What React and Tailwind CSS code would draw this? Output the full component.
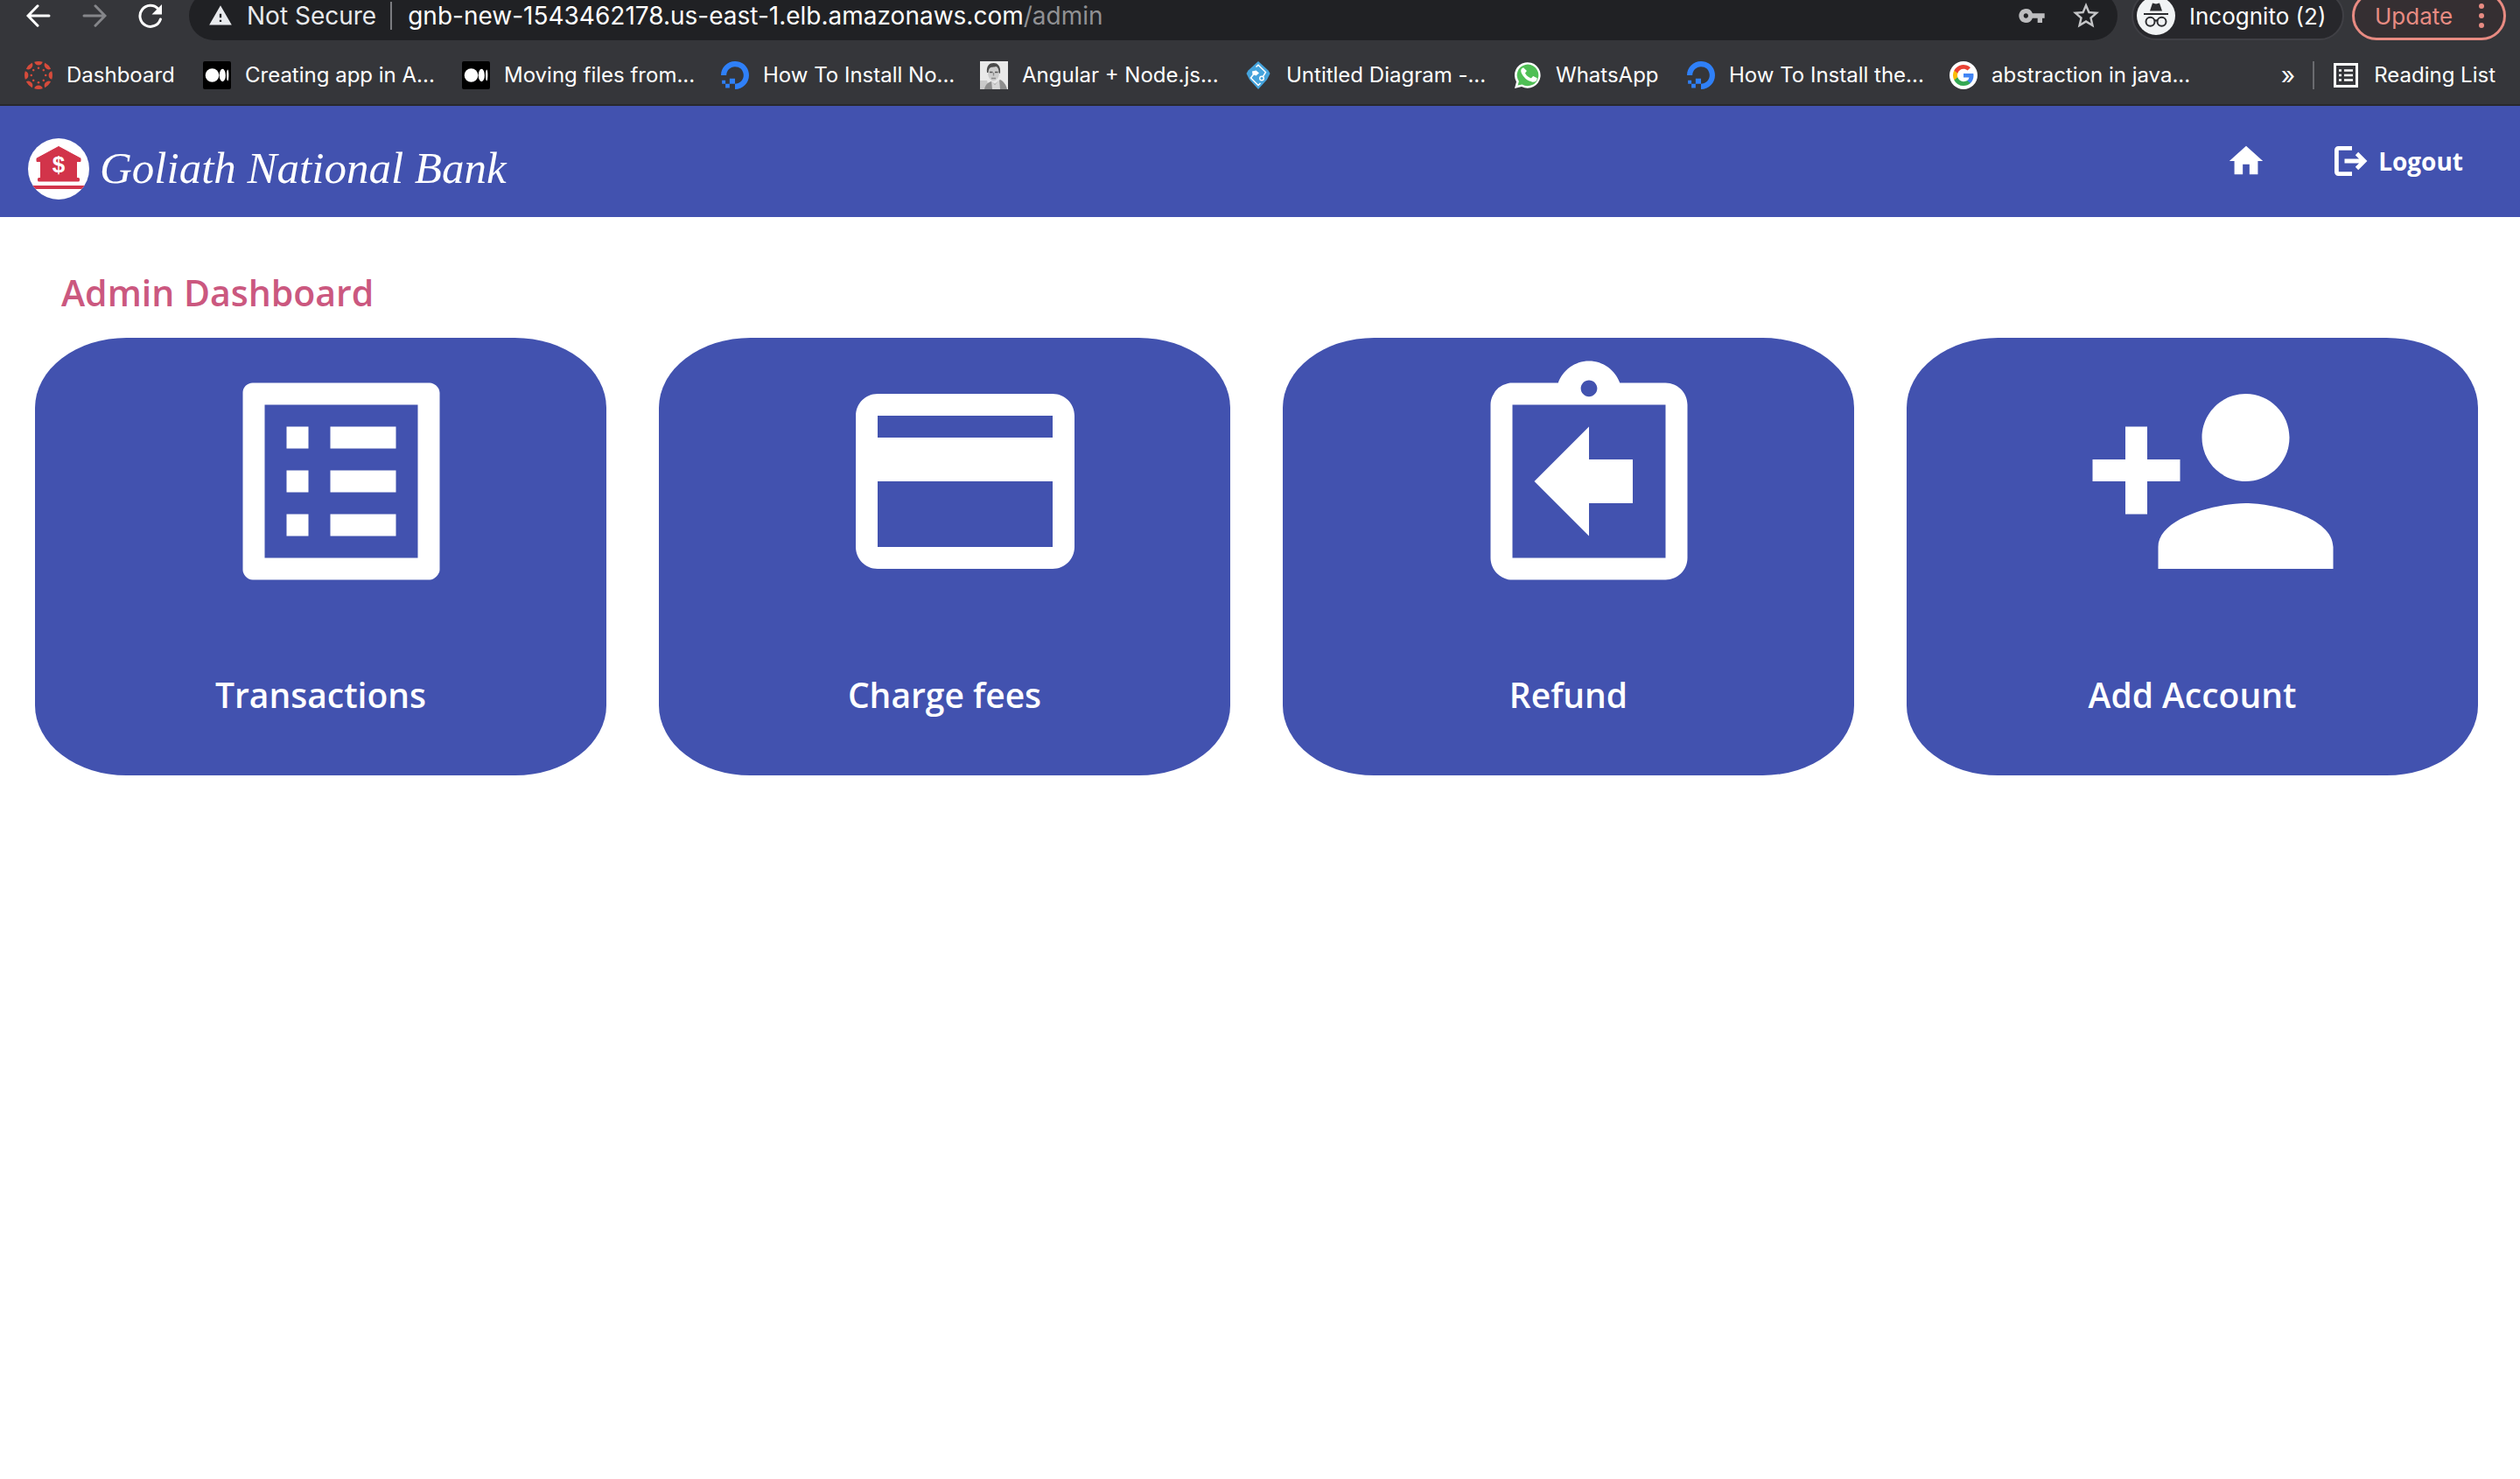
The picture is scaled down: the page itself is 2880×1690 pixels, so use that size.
import {
  MdListAlt,
  MdCreditCard,
  MdOutlineAssignmentReturn,
  MdPersonAdd,
  MdHome,
  MdVpnKey,
  MdStarBorder,
  MdWarning,
} from "react-icons/md";
import { SiDigitalocean } from "react-icons/si";

function CanvasIcon() {
  const angles = [0, 45, 90, 135, 180, 225, 270, 315];
  return (
    <svg viewBox="0 0 32 32" className="size-8 shrink-0" fill="#d64b3b" aria-hidden="true">
      {angles.map((a) => (
        <g key={a} transform={`rotate(${a} 16 16)`}>
          <path d="M11.200 0.800A16 16 0 0 1 20.800 0.800A5 5 0 0 1 11.200 0.800z" />
          <circle cx="16" cy="7.800" r="1.300" />
        </g>
      ))}
    </svg>
  );
}

function MediumIcon() {
  return (
    <svg viewBox="0 0 32 32" className="size-8 shrink-0" aria-hidden="true">
      <rect width="32" height="32" rx="2" fill="#000" />
      <g fill="#fff">
        <circle cx="10.5" cy="16" r="7.8" />
        <ellipse cx="22.3" cy="16" rx="3.6" ry="7.2" />
        <ellipse cx="28.2" cy="16" rx="1.2" ry="6.4" />
      </g>
    </svg>
  );
}

function OceanIcon() {
  return <SiDigitalocean className="size-8 shrink-0 text-[#2f80f8]" aria-hidden="true" />;
}

function PortraitIcon() {
  return (
    <svg viewBox="0 0 32 32" className="size-8 shrink-0" aria-hidden="true">
      <rect width="32" height="32" fill="#e9e9e9" />
      <path d="M0 22h8l3 10H0z" fill="#c9c9c9" />
      <path d="M5 32c1-5 4-8 8-9l4 3 6-5c4 2 7 6 8 11z" fill="#8d8d8d" />
      <path d="M13 22l4 5 5-6 1 11h-9z" fill="#d6d6d6" />
      <ellipse cx="15.5" cy="13.5" rx="6.5" ry="9" fill="#cdcdcd" />
      <path d="M8 13C7 5 11 2 15.500 2S24 5 23 14l-1.500-1c0-4-1-6-3-7-3 1-6 0-7.500 2-1 1-1.500 3-1.500 5z" fill="#4b4b4b" />
      <path d="M11 12.500h3.500M17 12.500h3.500" stroke="#5a5a5a" strokeWidth="1.600" />
      <path d="M15.500 13v3.500M13 19.500h5" stroke="#8a8a8a" strokeWidth="1.400" fill="none" />
    </svg>
  );
}

function DiagramIcon() {
  return (
    <svg viewBox="0 0 32 32" className="size-8 shrink-0" fill="none" aria-hidden="true">
      <path d="M16 0l11.500 10.500L29.500 14 26 21 16 32 6 21 2.500 14 4.500 10.500z" fill="#45a3dc" />
      <path d="M13.500 6.500L16 4.200l8.500 8.300-3.200 5.200M11 14.500L7.500 19l8.500 8.500 2.500-2.500" stroke="#fff" strokeWidth="1.500" />
      <path d="M9 11.500l4.500-1 3.500 3-3.500 3-4-1.500z" fill="#fff" />
      <circle cx="20" cy="19.500" r="2.300" stroke="#fff" strokeWidth="1.400" />
    </svg>
  );
}

function WhatsAppIcon() {
  return (
    <svg viewBox="0 0 32 32" className="size-8 shrink-0" aria-hidden="true">
      <path d="M1 31l2-7.600A14.800 14.800 0 1 1 9 29.100z" fill="#fff" />
      <path d="M4.600 27.600l1.300-4.700A12.300 12.300 0 1 1 9.600 26.400z" fill="#4fbf55" />
      <path
        d="M11.500 8.800c-.4-.8-.8-.8-1.200-.8-1.200 0-2.600 1.300-2.600 3.600 0 2.200 1.600 4.300 1.900 4.600.2.300 3.100 5 7.700 6.800 3.800 1.500 4.600 1.200 5.400 1.100.8-.1 2.700-1.100 3.100-2.200.4-1.100.4-2 .3-2.200-.1-.2-.4-.3-.9-.5l-3-1.500c-.4-.1-.7-.2-1 .2l-1.400 1.700c-.3.300-.5.300-1 .1-.4-.2-1.900-.7-3.600-2.200-1.300-1.200-2.200-2.700-2.500-3.100-.300-.4 0-.7.2-.9l1.200-1.500c.2-.3.200-.5.100-.8z"
        fill="#fff"
        transform="translate(0.500 -0.500)"
      />
    </svg>
  );
}

function GoogleIcon() {
  return (
    <svg viewBox="0 0 32 32" className="size-8 shrink-0" aria-hidden="true">
      <circle cx="16" cy="16" r="16" fill="#fff" />
      <g transform="translate(4 4)">
        <path fill="#4285f4" d="M23.500 12.300c0-.8-.1-1.600-.2-2.300H12v4.500h6.500a5.500 5.500 0 0 1-2.400 3.600v3h3.900c2.200-2.100 3.500-5.100 3.500-8.800z" />
        <path fill="#34a853" d="M12 24c3.200 0 6-1.100 8-2.900l-3.900-3c-1.100.7-2.400 1.100-4.100 1.100-3.100 0-5.800-2.100-6.700-4.900h-4v3.100A12 12 0 0 0 12 24z" />
        <path fill="#fbbc05" d="M5.300 14.300a7.200 7.200 0 0 1 0-4.600V6.600h-4a12 12 0 0 0 0 10.800z" />
        <path fill="#ea4335" d="M12 4.800c1.800 0 3.300.6 4.600 1.800L20 3.200A12 12 0 0 0 1.300 6.600l4 3.100C6.200 6.900 8.900 4.800 12 4.800z" />
      </g>
    </svg>
  );
}

function ReadingListIcon() {
  return (
    <svg viewBox="0 0 28 28" className="size-7 shrink-0" fill="none" aria-hidden="true">
      <rect x="1.500" y="1.500" width="25" height="25" stroke="#fff" strokeWidth="3" />
      <path d="M6 8.500h3M6 14h3M6 19.500h3M12 8.500h10M12 14h10M12 19.500h10" stroke="#fff" strokeWidth="2.600" />
    </svg>
  );
}

function ArrowIcon({ flip = false }) {
  return (
    <svg viewBox="0 0 28 28" className={flip ? "size-7 rotate-180" : "size-7"} fill="none" stroke="currentColor" strokeWidth="3" strokeLinecap="round" aria-hidden="true">
      <path d="M26 14H2.500M13 2.800L2 14l11 11.200" />
    </svg>
  );
}

function ReloadIcon() {
  return (
    <svg viewBox="0 0 28 28" className="size-7" aria-hidden="true">
      <path d="M22.800 6.200A12 12 0 1 0 25.400 18" fill="none" stroke="currentColor" strokeWidth="3" strokeLinecap="round" />
      <path d="M27 1v11.500H15.500z" fill="currentColor" />
    </svg>
  );
}

function IncognitoIcon() {
  return (
    <svg viewBox="0 0 44 44" className="size-11" aria-hidden="true">
      <circle cx="22" cy="22" r="22" fill="#f1f3f4" />
      <path d="M15 16.500L18 7.500l4 1 4-1 3 9z" fill="#2b2c2f" />
      <path d="M8 20h28" stroke="#2b2c2f" strokeWidth="2" />
      <g fill="none" stroke="#2b2c2f" strokeWidth="2">
        <circle cx="15.500" cy="28.800" r="5" />
        <circle cx="28.500" cy="28.800" r="5" />
        <path d="M20.300 28c1-1 2.400-1 3.400 0" />
      </g>
    </svg>
  );
}

function BankLogo() {
  return (
    <svg viewBox="0 0 70 70" className="size-[70px] shrink-0" aria-hidden="true">
      <clipPath id="bank-disc">
        <circle cx="35" cy="35" r="35" />
      </clipPath>
      <circle cx="35" cy="35" r="35" fill="#fff" />
      <g fill="#d2344a" clipPath="url(#bank-disc)">
        <path d="M35 9.500L60 23v3.500H10V23z" stroke="#d2344a" strokeLinejoin="round" />
        <rect x="14" y="25" width="42" height="22" />
        <rect x="11" y="45" width="48" height="4.500" rx="1.500" />
        <rect x="4" y="54" width="62" height="4" />
      </g>
      <text x="35" y="39" textAnchor="middle" fill="#fff" className="font-['Liberation_Sans',sans-serif] text-[26px] font-bold">
        $
      </text>
    </svg>
  );
}

function LogoutIcon() {
  return (
    <svg viewBox="0 0 38 34" className="h-[34px] w-[38px]" fill="none" stroke="currentColor" strokeWidth="4.800" aria-hidden="true">
      <path d="M20 2.400H4.400a2 2 0 0 0-2 2v25.200a2 2 0 0 0 2 2H20" />
      <path d="M11.500 17H34M25.500 8.500L34 17l-8.500 8.500" />
    </svg>
  );
}

const bookmarks = [
  { label: "Dashboard", Icon: CanvasIcon, width: "w-[204px]" },
  { label: "Creating app in A...", Icon: MediumIcon, width: "w-[296px]" },
  { label: "Moving files from...", Icon: MediumIcon, width: "w-[296px]" },
  { label: "How To Install No...", Icon: OceanIcon, width: "w-[296px]" },
  { label: "Angular + Node.js...", Icon: PortraitIcon, width: "w-[302px]" },
  { label: "Untitled Diagram -...", Icon: DiagramIcon, width: "w-[308px]" },
  { label: "WhatsApp", Icon: WhatsAppIcon, width: "w-[198px]" },
  { label: "How To Install the...", Icon: OceanIcon, width: "w-[300px]" },
  { label: "abstraction in java...", Icon: GoogleIcon, width: "w-[296px]" },
];

const cards = [
  { label: "Transactions", Icon: MdListAlt },
  { label: "Charge fees", Icon: MdCreditCard },
  { label: "Refund", Icon: MdOutlineAssignmentReturn },
  { label: "Add Account", Icon: MdPersonAdd },
];

function BrowserBar() {
  return (
    <div className="border-b-2 border-[#28292c] bg-[#35363a] font-['Inter',sans-serif] text-white">
      <div className="flex h-[46px] items-end overflow-hidden pr-4 pl-[30px] text-[28px]">
        <div className="flex h-14 w-[186px] shrink-0 items-center gap-9">
          <button type="button" aria-label="Back"><ArrowIcon /></button>
          <button type="button" aria-label="Forward" className="text-[#85868a]"><ArrowIcon flip /></button>
          <button type="button" aria-label="Reload"><ReloadIcon /></button>
        </div>
        <div className="flex h-14 min-w-0 flex-1 items-center rounded-full bg-[#202124] pr-[18px] pl-[22px]">
          <MdWarning className="size-7 shrink-0 text-[#e8eaed]" aria-hidden="true" />
          <span className="ml-4 whitespace-nowrap text-[#e8eaed]">Not Secure</span>
          <span className="ml-4 h-8 w-[2px] shrink-0 bg-[#7b7c80]" />
          <a href="#admin" className="ml-[18px] flex-1 whitespace-nowrap">
            gnb-new-1543462178.us-east-1.elb.amazonaws.com<span className="text-[#909194]">/admin</span>
          </a>
          <button type="button" aria-label="Saved passwords" className="text-[#bdbdbf]"><MdVpnKey className="size-8" /></button>
          <button type="button" aria-label="Bookmark this page" className="ml-7 text-[#c4c5c7]"><MdStarBorder className="size-9" /></button>
        </div>
        <button type="button" className="ml-4 flex h-14 w-[243px] shrink-0 items-center rounded-full border-2 border-[#404045] bg-[#27272b] pl-1 text-[26px] whitespace-nowrap">
          <IncognitoIcon />
          <span className="ml-4">Incognito (2)</span>
        </button>
        <button type="button" className="ml-[9px] flex h-14 w-[176px] shrink-0 items-center justify-between rounded-full border-[3px] border-[#e88b82] bg-[#352f32] pr-[22px] pl-[23px] text-[26px] text-[#e88b82]">
          Update
          <svg viewBox="0 0 6 28" className="h-7 w-[6px]" fill="currentColor" aria-hidden="true">
            <circle cx="3" cy="3" r="3" />
            <circle cx="3" cy="14" r="3" />
            <circle cx="3" cy="25" r="3" />
          </svg>
        </button>
      </div>
      <nav aria-label="Bookmarks" className="flex h-[73px] items-center pt-[7px] pr-7 pl-7 text-[24px]">
        <div className="flex min-w-0 flex-1 overflow-hidden">
          {bookmarks.map(({ label, Icon, width }) => (
            <a key={label} href="#bookmark" className={`flex shrink-0 items-center gap-4 whitespace-nowrap ${width}`}>
              <Icon />
              {label}
            </a>
          ))}
        </div>
        <button type="button" className="text-[28px] leading-8" aria-label="More bookmarks">»</button>
        <span className="ml-5 h-8 w-[2px] bg-[#6a6b6f]" />
        <button type="button" className="ml-[22px] flex items-center gap-[18px] whitespace-nowrap">
          <ReadingListIcon />
          Reading List
        </button>
      </nav>
    </div>
  );
}

function Header() {
  return (
    <header className="flex h-[127px] items-center justify-between bg-[#4252af] pr-[65px] pl-8 text-white">
      <a href="#home" className="flex items-center gap-3 pt-4">
        <BankLogo />
        <span className="font-['Liberation_Serif',serif] text-[51px] whitespace-nowrap italic">Goliath National Bank</span>
      </a>
      <nav aria-label="Account" className="flex items-center gap-[78px] pb-[2px]">
        <a href="#home" aria-label="Home"><MdHome className="size-[46px]" /></a>
        <button type="button" className="flex items-center gap-3 font-['Open_Sans',sans-serif] text-[28px] font-bold">
          <LogoutIcon />
          Logout
        </button>
      </nav>
    </header>
  );
}

export default function App() {
  return (
    <div className="min-h-screen bg-white">
      <BrowserBar />
      <Header />
      <main className="pt-14 pr-12 pb-14 pl-10 font-['Open_Sans',sans-serif] font-semibold">
        <h1 className="pl-[30px] text-[41px] leading-[60px] text-[#cb587f]">Admin Dashboard</h1>
        <div className="mt-[22px] grid grid-cols-4 gap-[60px]">
          {cards.map(({ label, Icon }) => (
            <button key={label} type="button" className="flex h-[500px] flex-col rounded-[16%] bg-[#4252af] pt-[14px] text-white">
              <Icon className="ml-[200px] size-[300px]" aria-hidden="true" />
              <span className="mt-16 w-full text-center text-[39px] leading-[60px]">{label}</span>
            </button>
          ))}
        </div>
      </main>
    </div>
  );
}
